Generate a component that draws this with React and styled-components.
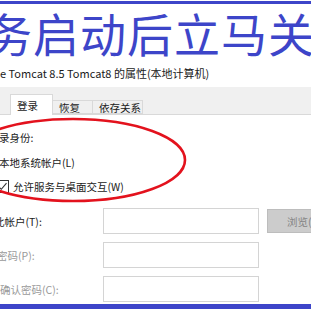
import React from 'react';
import styled, { createGlobalStyle } from 'styled-components';

const GlobalStyle = createGlobalStyle`
  html, body {
    margin: 0;
    padding: 0;
    background: #ffffff;
    overflow: hidden;
  }
  body {
    font-family: "Noto Sans CJK SC", "Noto Sans", sans-serif;
  }
`;

const BLUE = '#3d45c9';

const Page = styled.div`
  position: relative;
  width: 311px;
  height: 311px;
  display: flex;
  flex-direction: column;
  overflow: hidden;
  background: #ffffff;
`;

const Bar = styled.div`
  flex: none;
  height: ${(p) => p.$h}px;
  margin-top: ${(p) => p.$top}px;
  background: ${BLUE};
`;

const Title = styled.div`
  height: 56px;
  line-height: 56px;
  margin-left: -14px;
  font-size: 46px;
  letter-spacing: 1px;
  color: ${BLUE};
  white-space: nowrap;
`;

const Caption = styled.div`
  height: 27px;
  line-height: 26px;
  font-size: 11px;
  color: #1a1a1a;
  white-space: nowrap;
`;

const TabStrip = styled.div`
  flex: none;
  height: 27px;
  display: flex;
  align-items: flex-end;
  padding-left: 10px;
  background: #f0f0f0;
  border-bottom: 1px solid #d9d9d9;
`;

const Tab = styled.div`
  box-sizing: border-box;
  width: ${(p) => p.$w}px;
  height: ${(p) => (p.$active ? 21 : 14)}px;
  margin-bottom: ${(p) => (p.$active ? -1 : 0)}px;
  padding-left: 6px;
  display: flex;
  align-items: center;
  font-size: 10.5px;
  color: #1a1a1a;
  background: ${(p) => (p.$active ? '#ffffff' : '#f0f0f0')};
  border: 1px solid #d9d9d9;
  border-bottom: ${(p) => (p.$active ? 'none' : '1px solid #d9d9d9')};
  border-left: ${(p) => (p.$active ? '1px solid #d9d9d9' : 'none')};
  white-space: nowrap;
`;

const Body = styled.div`
  display: flex;
  flex-direction: column;
`;

const Line = styled.div`
  height: 18px;
  margin-top: ${(p) => p.$top}px;
  margin-left: ${(p) => p.$left || 0}px;
  display: flex;
  align-items: center;
  gap: 4px;
  font-size: 10.5px;
  color: #1a1a1a;
  white-space: nowrap;
`;

const Check = styled.span`
  box-sizing: border-box;
  width: 13px;
  height: 13px;
  border: 1px solid #333333;
  background: #ffffff;
  display: flex;
  align-items: center;
  justify-content: center;
`;

const Fields = styled.div`
  margin-top: 13px;
  margin-left: -3px;
  display: grid;
  grid-template-columns: 98px 156px 75px;
  grid-auto-rows: 26px;
  column-gap: 8px;
  row-gap: 8px;
  align-items: center;
`;

const Label = styled.span`
  margin-left: ${(p) => p.$offset}px;
  font-size: 10.5px;
  color: ${(p) => (p.$disabled ? '#9a9a9a' : '#1a1a1a')};
  white-space: nowrap;
`;

const Input = styled.div`
  box-sizing: border-box;
  height: 26px;
  border: 1px solid #d4d4d4;
  background: #ffffff;
`;

const Browse = styled.div`
  box-sizing: border-box;
  height: 24px;
  display: flex;
  align-items: center;
  justify-content: center;
  background: #cccccc;
  border: 1px solid #bdbdbd;
  font-size: 10.5px;
  color: #858585;
  white-space: nowrap;
`;

const Annotation = styled.svg`
  position: absolute;
  left: 0;
  top: 0;
  pointer-events: none;
`;

export default function App() {
  return (
    <>
      <GlobalStyle />
      <Page>
        <Bar $top={1} $h={3} />
        <Title>务启动后立马关</Title>
        <Caption>e Tomcat 8.5 Tomcat8 的属性(本地计算机)</Caption>
        <TabStrip>
          <Tab $active $w={43}>登录</Tab>
          <Tab $w={40}>恢复</Tab>
          <Tab $w={50}>依存关系</Tab>
        </TabStrip>
        <Body>
          <Line $top={13} $left={-1}>录身份:</Line>
          <Line $top={7} $left={-1}>本地系统帐户(L)</Line>
          <Line $top={6} $left={-4}>
            <Check>
              <svg width="11" height="11" viewBox="0 0 11 11">
                <path d="M1.5 5.5 L4.3 8.3 L9.5 2.2" fill="none" stroke="#333" strokeWidth="1.1" />
              </svg>
            </Check>
            允许服务与桌面交互(W)
          </Line>
          <Fields>
            <Label $offset={-3}>此帐户(T):</Label>
            <Input />
            <Browse>浏览(B)</Browse>
            <Label $offset={0} $disabled>密码(P):</Label>
            <Input />
            <span />
            <Label $offset={3} $disabled>确认密码(C):</Label>
            <Input />
            <span />
          </Fields>
        </Body>
        <Bar $top={2} $h={5} />
        <Annotation width="311" height="311" viewBox="0 0 311 311">
          <ellipse cx="73" cy="160" rx="112" ry="41" fill="none" stroke="#e3121d" strokeWidth="2.6" />
        </Annotation>
      </Page>
    </>
  );
}
